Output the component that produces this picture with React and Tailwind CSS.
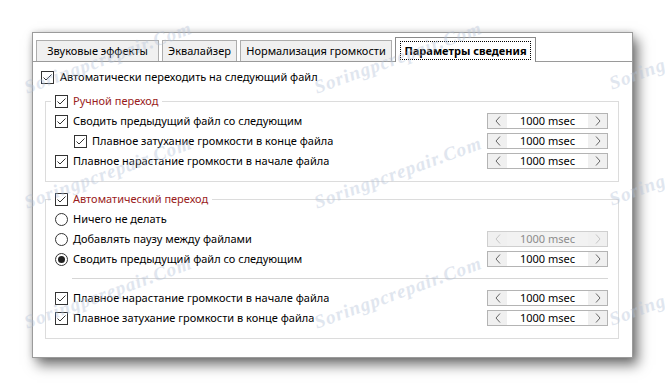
import React from "react";

const Check = ({ checked = true }) => (
  <span className="w-[13px] h-[13px] border border-[#333] bg-white flex items-center justify-center shrink-0">
    {checked && (
      <svg width="11" height="11" viewBox="0 0 11 11">
        <path d="M1.5 5.5 L4 8 L9.5 2.5" fill="none" stroke="#333" strokeWidth="1" />
      </svg>
    )}
  </span>
);

const Radio = ({ on = false }) => (
  <span className="w-[13px] h-[13px] rounded-full border border-[#333] bg-white flex items-center justify-center shrink-0">
    {on && <span className="w-[7px] h-[7px] rounded-full bg-[#222]" />}
  </span>
);

const Chevron = ({ dir, color }) => (
  <svg width="6" height="10" viewBox="0 0 6 10">
    <path
      d={dir === "left" ? "M5 0.5 L1 5 L5 9.5" : "M1 0.5 L5 5 L1 9.5"}
      fill="none"
      stroke={color}
      strokeWidth="1"
    />
  </svg>
);

const Spin = ({ disabled = false }) => (
  <div
    className={
      disabled
        ? "w-[121px] h-[16px] border border-[#cfcfcf] bg-[#f2f2f2] flex shrink-0"
        : "w-[121px] h-[16px] border border-[#b4b4b4] flex shrink-0"
    }
  >
    <div className="w-[19px] flex items-center justify-center bg-[#f0f0f0]">
      <Chevron dir="left" color={disabled ? "#c4c4c4" : "#666"} />
    </div>
    <div
      className={
        disabled
          ? "flex-1 bg-[#f2f2f2] text-center leading-[14px] text-[#8c8c8c]"
          : "flex-1 bg-white text-center leading-[14px] text-black"
      }
    >
      1000 msec
    </div>
    <div className="w-[19px] flex items-center justify-center bg-[#f0f0f0]">
      <Chevron dir="right" color={disabled ? "#c4c4c4" : "#666"} />
    </div>
  </div>
);

const Row = ({ control, label, spin, indent = false }) => (
  <div className="h-[20px] flex items-center justify-between pl-[4px]">
    <div className={indent ? "flex items-center pl-[19px]" : "flex items-center"}>
      {control}
      <span className="ml-[5px]">{label}</span>
    </div>
    {spin}
  </div>
);

const Legend = ({ label }) => (
  <legend className="px-[4px]">
    <div className="h-[20px] flex items-center">
      <Check />
      <span className="ml-[5px] text-[#9a1c1c]">{label}</span>
    </div>
  </legend>
);

const mark =
  "absolute origin-left -rotate-[20deg] pointer-events-none whitespace-nowrap font-['Liberation_Serif',serif] italic font-bold text-[19px] leading-[24px] tracking-[1px] text-[#b4c2d8] opacity-40";

export default function App() {
  return (
    <div className="w-[665px] h-[390px] bg-white relative overflow-hidden pt-[32px] pl-[32px] font-['Noto_Sans',sans-serif] text-[11px] text-black">
      <div className="w-[601px] h-[326px] bg-white border border-[#9b9b9b] shadow-[5px_7px_12px_rgba(0,0,0,0.55),0_0_6px_rgba(0,0,0,0.15)] flex flex-col">
        {/* tabs */}
        <div className="h-[29px] flex items-end gap-[3px] pl-[3px] border-b border-[#9a9a9a] shrink-0">
          <div className="w-[123px] h-[21px] bg-[#f0f0f0] border-t border-l border-r border-[#adadad] flex items-center justify-center">
            Звуковые эффекты
          </div>
          <div className="w-[75px] h-[21px] bg-[#f0f0f0] border-t border-l border-r border-[#adadad] flex items-center justify-center">
            Эквалайзер
          </div>
          <div className="w-[152px] h-[21px] bg-[#f0f0f0] border-t border-l border-r border-[#adadad] flex items-center justify-center">
            Нормализация громкости
          </div>
          <div className="w-[141px] h-[25px] -mb-px bg-white border-t border-l border-r border-[#8a8a8a] flex items-center justify-center">
            <span className="border border-dotted border-black px-[3px] leading-[17px] font-bold">
              Параметры сведения
            </span>
          </div>
        </div>

        {/* panel */}
        <div className="flex-1 pt-[5px]">
          <div className="h-[20px] flex items-center pl-[8px]">
            <Check />
            <span className="ml-[6px]">Автоматически переходить на следующий файл</span>
          </div>

          <fieldset className="mt-[4px] ml-[12px] w-[574px] border border-[#dcdcdc] pl-[5px] pr-[10px] pb-[10px]">
            <Legend label="Ручной переход" />
            <Row control={<Check />} label="Сводить предыдущий файл со следующим" spin={<Spin />} />
            <Row control={<Check />} label="Плавное затухание громкости в конце файла" spin={<Spin />} indent />
            <Row control={<Check />} label="Плавное нарастание громкости в начале файла" spin={<Spin />} />
          </fieldset>

          <fieldset className="mt-[7px] ml-[12px] w-[574px] border border-[#dcdcdc] pl-[5px] pr-[10px] pb-[10px]">
            <Legend label="Автоматический переход" />
            <Row control={<Radio />} label="Ничего не делать" />
            <Row control={<Radio />} label="Добавлять паузу между файлами" spin={<Spin disabled />} />
            <Row control={<Radio on />} label="Сводить предыдущий файл со следующим" spin={<Spin />} />
            <div className="h-[19px] flex items-center pl-[21px]">
              <div className="h-px flex-1 bg-[#d6d6d6]" />
            </div>
            <Row control={<Check />} label="Плавное нарастание громкости в начале файла" spin={<Spin />} />
            <Row control={<Check />} label="Плавное затухание громкости в конце файла" spin={<Spin />} />
          </fieldset>
        </div>
      </div>

      {/* watermarks */}
      <span className={`${mark} left-[25px] top-[76px]`}>Soringpcrepair.Com</span>
      <span className={`${mark} left-[315px] top-[76px]`}>Soringpcrepair.Com</span>
      <span className={`${mark} left-[610px] top-[72px]`}>Soringpcrepair.Com</span>
      <span className={`${mark} left-[25px] top-[191px]`}>Soringpcrepair.Com</span>
      <span className={`${mark} left-[315px] top-[191px]`}>Soringpcrepair.Com</span>
      <span className={`${mark} left-[610px] top-[188px]`}>Soringpcrepair.Com</span>
      <span className={`${mark} left-[25px] top-[311px]`}>Soringpcrepair.Com</span>
      <span className={`${mark} left-[315px] top-[311px]`}>Soringpcrepair.Com</span>
      <span className={`${mark} left-[610px] top-[308px]`}>Soringpcrepair.Com</span>
    </div>
  );
}
